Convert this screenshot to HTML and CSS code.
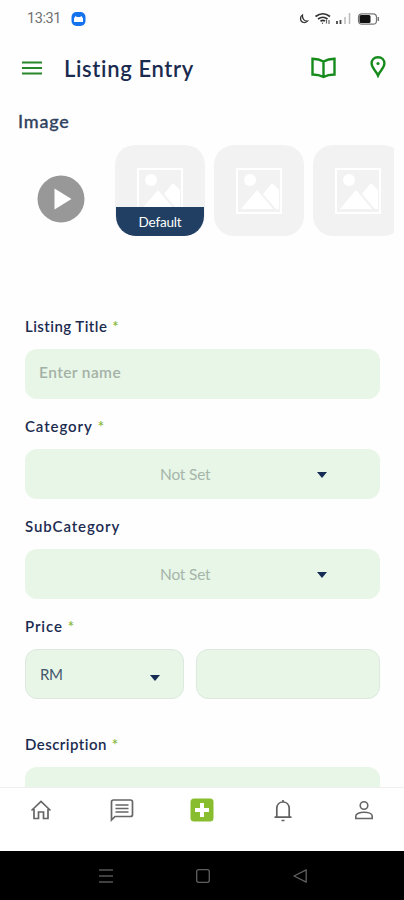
FILE: index.html
```html
<!DOCTYPE html>
<html lang="en">
<head>
<meta charset="utf-8">
<title>Listing Entry</title>
<link rel="stylesheet" href="styles.css">
</head>
<body>
<svg class="defs" width="0" height="0" aria-hidden="true">
  <symbol id="picture" viewBox="0 0 46 46">
    <rect x="1" y="1" width="44" height="44" fill="none" stroke="#fff" stroke-width="2"/>
    <circle cx="14" cy="12" r="6" fill="#fff"/>
    <path d="M5 41L21 22 37 41zM27 26L36 15 43 22V41H40z" fill="#fff"/>
  </symbol>
</svg>
<div class="screen">
  <header class="status">
    <span class="clock">13:31</span>
    <svg class="app" width="15" height="14" viewBox="0 0 15 14"><rect x=".5" width="14" height="14" rx="5" fill="#1472ef"/><path d="M3 10V6.5L4.5 4 6 5H9L10.5 4 12 6.5V10z" fill="#fff"/></svg>
    <svg class="signals" width="82" height="14" viewBox="0 0 82 14">
      <path d="M4.500 3C1.500 5 2 10 5.800 10.500 7.500 10.700 9 10 9.800 9 6.500 9.500 4 7 4.500 3z" fill="none" stroke="#333" stroke-width="1.200"/>
      <path d="M17.500 4.500Q25 -1 32 4.500M20 7Q25 3.500 29.500 7M22.500 9.200Q25 7.500 27 9.200" fill="none" stroke="#333" stroke-width="1.700"/>
      <path d="M24.500 10.500v1.500M28.500 7.500v4M31 8v4" stroke="#666" stroke-width="1.200"/>
      <path d="M39 9v3M42.500 8v4" stroke="#444" stroke-width="1.800"/><path d="M47 5v7M51.500 1v11" stroke="#bbb" stroke-width="1.500"/>
      <rect x="60.500" y="1.800" width="18" height="10.400" rx="3.500" fill="#fff" stroke="#777" stroke-width="1.200"/><rect x="61.500" y="3" width="11" height="8" rx="1.500" fill="#111"/><path d="M80.300 5v4" stroke="#777" stroke-width="1.500"/>
    </svg>
  </header>
  <div class="appbar">
    <svg class="menu" width="20" height="14" viewBox="0 0 20 14"><path d="M0 1.500H20M0 7H20M0 12.500H20" stroke="#28862b" stroke-width="2"/></svg>
    <h1>Listing Entry</h1>
    <svg class="book" width="25" height="22" viewBox="0 0 25 22"><path d="M1.500 1.800Q8 2 12.500 4.500 17 2 23.500 1.800V17.500Q17 17.500 12.500 20 8 17.500 1.500 17.500zM12.500 4.500V20" fill="none" stroke="#168b1c" stroke-width="2.400"/></svg>
    <svg class="pin" width="16" height="22" viewBox="0 0 16 22"><path d="M8 1.200C4 1.200 1.600 4 1.600 7.500 1.600 12 6 14.500 8 19.500 10 14.500 14.400 12 14.400 7.500 14.400 4 12 1.200 8 1.200z" fill="none" stroke="#168b1c" stroke-width="2.400"/><circle cx="8" cy="7.500" r="1.600" fill="#168b1c"/></svg>
  </div>
  <main>
    <h2>Image</h2>
    <div class="media">
      <div class="video"><svg width="48" height="48" viewBox="0 0 48 48"><circle cx="24" cy="24" r="23.500" fill="#989898"/><path d="M17.500 13.500V34.500L34.500 24z" fill="#fff"/></svg></div>
      <div class="thumb"><svg width="46" height="46"><use href="#picture"/></svg><span class="tag">Default</span></div>
      <div class="thumb"><svg width="46" height="46"><use href="#picture"/></svg></div>
      <div class="thumb"><svg width="46" height="46"><use href="#picture"/></svg></div>
    </div>
    <form>
      <label><span>Listing Title</span><i>*</i></label>
      <div class="field entry"><span>Enter name</span></div>
      <label><span class="wide">Category</span><i>*</i></label>
      <div class="field select"><span>Not Set</span><b class="caret"></b></div>
      <label><span class="wide">SubCategory</span></label>
      <div class="field select"><span>Not Set</span><b class="caret"></b></div>
      <label><span class="wide">Price</span><i>*</i></label>
      <div class="price">
        <div class="field currency"><span>RM</span><b class="caret"></b></div>
        <div class="field amount"></div>
      </div>
      <label><span>Description</span><i>*</i></label>
      <div class="field"></div>
    </form>
  </main>
  <nav class="tabs">
    <svg width="24" height="24" viewBox="0 0 24 24"><path d="M2.500 12.500L12 3.500 21.500 12.500M5 11V20.500H9.500V14H14.500V20.500H19V11" fill="none" stroke="#666" stroke-width="1.700"/></svg>
    <svg width="24" height="24" viewBox="0 0 24 24"><path d="M1.500 22V4Q1.500 2 3.500 2H20.500Q22.500 2 22.500 4V16.500Q22.500 18.500 20.500 18.500H5zM5.500 7H18.500M5.500 10.500H18.500M5.500 14H18.500" fill="none" stroke="#666" stroke-width="1.700"/></svg>
    <svg width="24" height="24" viewBox="0 0 24 24"><rect x=".5" y=".5" width="23" height="23" rx="3.500" fill="#88bd2f"/><path d="M12 5V19M5 12H19" stroke="#fff" stroke-width="4"/></svg>
    <svg width="24" height="24" viewBox="0 0 24 24"><path d="M3.500 19.200H20.500M5.800 19V10.500C5.800 6.500 8.500 4 12 4S18.200 6.500 18.200 10.500V19M12 4V2M10.500 22.500H13.500" fill="none" stroke="#606060" stroke-width="1.700"/></svg>
    <svg width="24" height="24" viewBox="0 0 24 24"><circle cx="12" cy="7.500" r="3.800" fill="none" stroke="#666" stroke-width="1.600"/><path d="M3.800 20.500V18C3.800 15.500 8 14.200 12 14.200S20.200 15.500 20.200 18V20.500z" fill="none" stroke="#666" stroke-width="1.600"/></svg>
  </nav>
  <footer class="system">
    <svg width="16" height="16" viewBox="0 0 16 16"><path d="M1 2H15M1 8H15M1 14H15" stroke="#555" stroke-width="1.400"/></svg>
    <svg width="16" height="16" viewBox="0 0 16 16"><rect x="1.700" y="1.700" width="12.600" height="12.600" rx="2" fill="none" stroke="#606060" stroke-width="1.300"/></svg>
    <svg width="16" height="16" viewBox="0 0 16 16"><path d="M14.200 1.800V14.200L2 8z" fill="none" stroke="#606060" stroke-width="1.300" stroke-linejoin="round"/></svg>
  </footer>
</div>
</body>
</html>
```
FILE: styles.css
```css
* { box-sizing: border-box; }
body { margin: 0; background: #fefefe; font-family: Lato, sans-serif; font-variant-ligatures: none; color: #1b2b50; }
svg { display: block; flex: none; }
.defs { position: absolute; }
.screen { width: 404px; height: 900px; display: flex; flex-direction: column; overflow: hidden; }
.status { height: 36px; flex: none; display: flex; align-items: center; padding: 1px 24px 0 27px; }
.clock { width: 44px; font: 14.5px/18px Roboto, sans-serif; letter-spacing: -.4px; color: #707070; }
.signals { margin-left: auto; }
.appbar { height: 64px; flex: none; display: flex; align-items: center; padding: 0 18.500px 0 22px; }
h1 { margin: 1px auto 0 22px; font-size: 22px; line-height: 28px; font-weight: 600; letter-spacing: .65px; white-space: nowrap; }
.book { margin-right: 34px; }
.pin { margin-top: -2px; }
main { flex: 1; min-height: 0; overflow: hidden; }
h2 { margin: 10px 0 0 18px; font-size: 18px; line-height: 22px; font-weight: 500; letter-spacing: .8px; color: #30425f; -webkit-text-stroke: .3px #30425f; }
.media { margin: 13px 10px 0 16px; height: 91px; display: flex; gap: 9px; overflow: hidden; }
.video { width: 90px; height: 91px; flex: none; display: flex; align-items: center; justify-content: center; padding-top: 17px; }
.thumb { position: relative; width: 90px; height: 91px; flex: none; border-radius: 20px; background: #f2f2f2; overflow: hidden; display: flex; align-items: center; justify-content: center; }
.tag { position: absolute; left: 1px; right: 1px; bottom: 0; height: 29px; background: #203f62; color: #fff; font-size: 13.5px; line-height: 31px; letter-spacing: -.2px; text-align: center; border-radius: 0 0 20px 20px; }
form { margin: 77px 24px 0 25px; }
label { display: flex; height: 25px; gap: 5px; font-size: 15px; line-height: 26px; font-weight: 600; letter-spacing: .45px; white-space: nowrap; }
label .wide { letter-spacing: .9px; }
label i { color: #86b83a; font-style: normal; }
.field { height: 50px; border-radius: 12px; background: #e7f6e7; display: flex; align-items: center; }
form > .field, .price { margin-top: 11px; margin-bottom: 14px; }
.entry span { margin: -4px 0 0 14px; color: #a4b1a6; font-size: 15.500px; font-weight: 600; letter-spacing: .4px; }
.caret { width: 0; height: 0; border: 5.500px solid transparent; border-top: 6px solid #172c54; border-bottom: 0; }
.select { padding-right: 53px; }
.select span { margin-left: 135px; color: #a6b5aa; font-size: 15.500px; letter-spacing: -.2px; }
.select .caret { margin: 2px 0 0 auto; }
.price { display: flex; gap: 12px; margin-bottom: 32px; }
.price .field { margin: 0; border: 1px solid #dde9df; }
.currency { width: 159px; padding: 0 23px 0 14px; }
.currency span { font-size: 15px; letter-spacing: -.5px; color: #45566d; }
.currency .caret { margin: 8px 0 0 auto; }
.amount { flex: 1; }
.tabs { height: 64px; flex: none; display: flex; justify-content: space-around; padding: 10px 0 0 1px; border-top: 1px solid #efefef; background: #fff; }
.system { height: 49px; flex: none; display: flex; justify-content: center; align-items: center; gap: 81px; padding-left: 1px; background: #000; }
```
